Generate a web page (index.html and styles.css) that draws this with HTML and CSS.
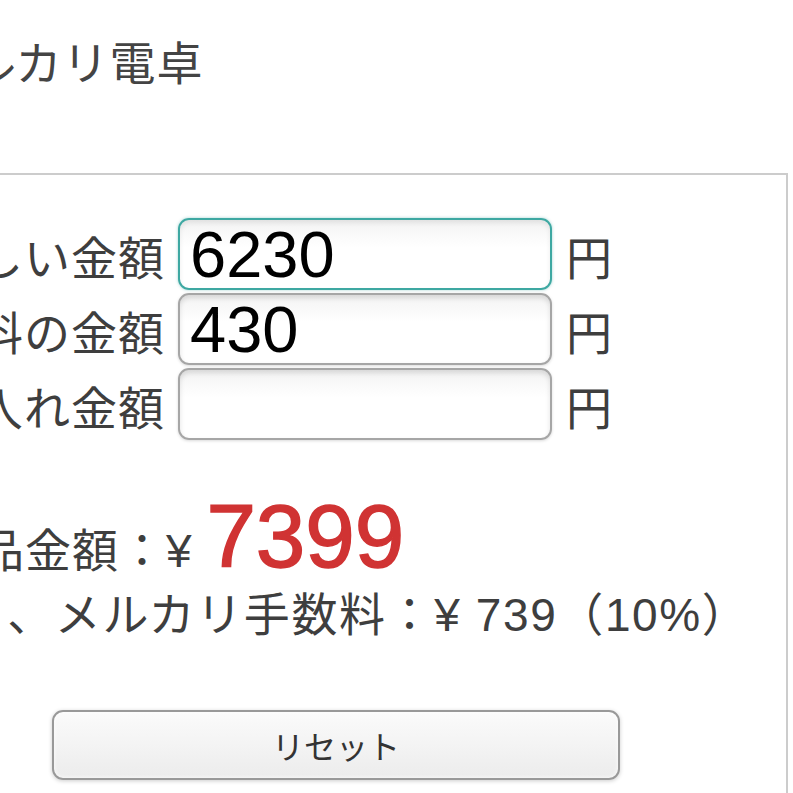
FILE: index.html
```html
<!DOCTYPE html>
<html lang="ja">
<head>
<meta charset="utf-8">
<title>メルカリ電卓</title>
<link rel="stylesheet" href="styles.css">
</head>
<body>
<div class="wrap">
	<h1 class="title">メルカリ電卓</h1>
	<div class="box">
		<div class="form">
			<label class="label" for="want">欲しい金額</label>
			<input class="field focus" id="want" type="text" value="6230">
			<span class="unit">円</span>

			<label class="label" for="ship">送料の金額</label>
			<input class="field" id="ship" type="text" value="430">
			<span class="unit">円</span>

			<label class="label" for="cost">仕入れ金額</label>
			<input class="field" id="cost" type="text" value="">
			<span class="unit">円</span>
		</div>

		<div class="result">
			<p class="total">出品金額：¥ <span class="price">7399</span></p>
			<p class="fee">うち、メルカリ手数料：¥ 739（10%）</p>
		</div>

		<button class="reset" type="button">リセット</button>
	</div>
</div>
</body>
</html>
```

FILE: styles.css
```css
*{
	padding: 0;
	margin: 0;
	box-sizing: border-box;
}
html,body{
	background: #fff;
	overflow: hidden;
}
body{
	font-family: "Liberation Sans", "Noto Sans CJK JP", sans-serif;
	color: #3e3e3e;
}
.wrap{
	margin-left: -130px;
	width: 918px;
}
.title{
	padding: 37px 0 0 53px;
	height: 173px;
	font-size: 46px;
	font-weight: normal;
	letter-spacing: 1px;
	line-height: 1.2;
	color: #444;
}
.box{
	border: 2px solid #ccc;
	padding: 43px 0 200px;
}
.form{
	display: grid;
	grid-template-columns: 248px 374px auto;
	row-gap: 3px;
	padding-left: 58px;
	align-items: center;
}
.label{
	margin-right: 15px;
	padding-top: 10px;
	font-size: 46px;
	letter-spacing: 1px;
	line-height: 1;
	text-align: right;
	white-space: nowrap;
}
.field{
	width: 374px;
	height: 72px;
	padding: 0 10px;
	border: 2px solid #a6a6a6;
	border-radius: 11px;
	background: linear-gradient(#f3f3f3, #fff 40%);
	box-shadow: inset 0 3px 5px rgba(0,0,0,.12), 0 1px 3px rgba(0,0,0,.15);
	font-family: "Liberation Sans", sans-serif;
	font-size: 65px;
	color: #000;
	outline: none;
}
.field.focus{
	border-color: #3ea8a2;
	box-shadow: inset 0 3px 5px rgba(0,0,0,.08), 0 0 3px rgba(62,168,162,.5);
}
.unit{
	margin-left: 14px;
	padding-top: 10px;
	font-size: 46px;
	line-height: 1;
}
.result{
	padding: 48px 0 0 40px;
}
.total{
	padding-left: 19px;
	font-size: 46px;
	letter-spacing: 1px;
	line-height: 1.1;
	white-space: nowrap;
}
.price{
	font-size: 89px;
	letter-spacing: 0;
	color: #d03333;
	-webkit-text-stroke: 1.5px #d03333;
}
.fee{
	font-size: 46px;
	letter-spacing: 1.6px;
	line-height: 1.3;
	white-space: nowrap;
}
.reset{
	display: block;
	margin: 64px 0 0 180px;
	width: 568px;
	height: 70px;
	border: 2px solid #999;
	border-radius: 11px;
	background: linear-gradient(#fbfbfb, #ececec);
	box-shadow: inset 0 0 4px rgba(255,255,255,.9), 0 1px 4px rgba(0,0,0,.2);
	font-family: "Noto Sans CJK JP", sans-serif;
	font-size: 32px;
	color: #333;
}
```
